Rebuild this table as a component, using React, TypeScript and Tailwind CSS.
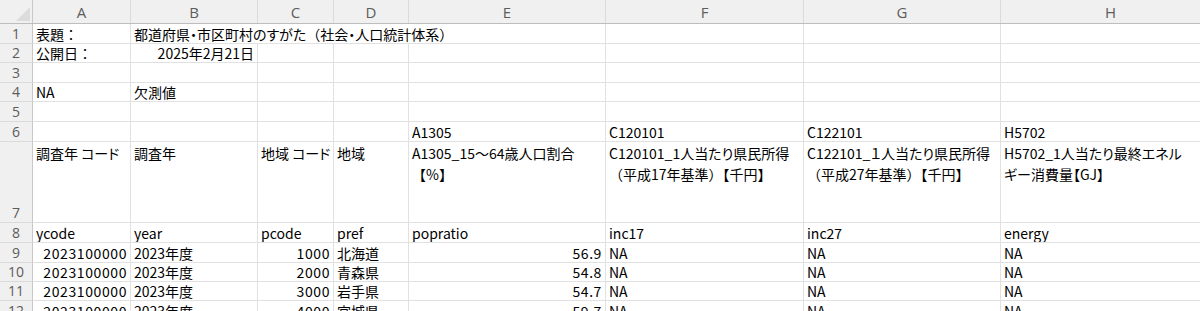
import React from "react";

type Cell = { text?: React.ReactNode; right?: boolean; num?: boolean; over?: boolean; noBorder?: boolean };

const colW = ["w-[98px]", "w-[127px]", "w-[76px]", "w-[75px]", "w-[197px]", "w-[198px]", "w-[197px]", "w-[220px]"];
const colLetters = ["A", "B", "C", "D", "E", "F", "G", "H"];
const rowH = ["h-[20px]", "h-[19px]", "h-[20px]", "h-[19px]", "h-[20px]", "h-[20px]", "h-[81px]", "h-[20px]", "h-[20px]", "h-[19px]", "h-[19px]", "h-[20px]"];

// full-width punctuation without palt squeeze
const Fw = ({ c }: { c: string }) => <span className="[font-feature-settings:normal]">{c}</span>;

const dataRows = [
  ["北海道", "1000", "56.9"],
  ["青森県", "2000", "54.8"],
  ["岩手県", "3000", "54.7"],
  ["宮城県", "4000", "59.7"],
];

const empty = (): Cell[] => [{}, {}, {}, {}, {}, {}, {}, {}];

const rows: Cell[][] = [
  [
    { text: <>表題<Fw c="：" /></> },
    { text: <>都道府県・市区町村のすがた<Fw c="（" />社会・人口統計体系<Fw c="）" /></>, over: true, noBorder: true },
    { noBorder: true },
    { noBorder: true },
    {}, {}, {}, {},
  ],
  [{ text: <>公開日<Fw c="：" /></> }, { text: "2025年2月21日", right: true }, {}, {}, {}, {}, {}, {}],
  empty(),
  [{ text: "NA" }, { text: "欠測値" }, {}, {}, {}, {}, {}, {}],
  empty(),
  [{}, {}, {}, {}, { text: "A1305" }, { text: "C120101" }, { text: "C122101" }, { text: "H5702" }],
  [
    { text: "調査年 コード" },
    { text: "調査年" },
    { text: "地域 コード" },
    { text: "地域" },
    { text: <>A1305_15～64歳人口割合<br /><Fw c="【" />%<Fw c="】" /></> },
    { text: <>C120101_1人当たり県民所得<br /><span className="[font-feature-settings:normal]">（平成17年基準）【千円】</span></> },
    { text: <>C122101_１人当たり県民所得<br /><span className="[font-feature-settings:normal]">（平成27年基準）【千円】</span></> },
    { text: <>H5702_1人当たり最終エネル<br />ギー消費量【GJ】</> },
  ],
  [{ text: "ycode" }, { text: "year" }, { text: "pcode" }, { text: "pref" }, { text: "popratio" }, { text: "inc17" }, { text: "inc27" }, { text: "energy" }],
  ...dataRows.map(([pref, code, ratio]) => [
    { text: "2023100000", right: true, num: true },
    { text: "2023年度" },
    { text: code, right: true, num: true },
    { text: pref },
    { text: ratio, right: true, num: true },
    { text: "NA" },
    { text: "NA" },
    { text: "NA" },
  ]),
];

export default function App() {
  return (
    <div className="w-[1200px] h-[311px] overflow-hidden bg-white text-black text-[14px] font-['Noto_Sans_CJK_JP','Noto_Sans',sans-serif] [font-feature-settings:'palt']">
      {/* column letters */}
      <div className="flex h-[24px] bg-[#f0f0f0] border-b border-[#bdbdbd]">
        <div className="relative w-[33px] shrink-0 border-r border-[#c8c8c8]">
          <svg className="absolute right-[2px] bottom-[2px]" width="14" height="14" viewBox="0 0 14 14">
            <polygon points="14,0 14,14 0,14" fill="#dcdcdc" />
          </svg>
        </div>
        {colLetters.map((l, i) => (
          <div
            key={l}
            className={`${colW[i]} shrink-0 flex items-center justify-center border-r border-[#dadada] text-[15px] text-[#5c5c5c] pt-[1px] font-['Open_Sans',sans-serif]`}
          >
            {l}
          </div>
        ))}
      </div>

      {rows.map((r, ri) => {
        const tall = ri === 6;
        return (
          <div key={ri} className={`flex ${rowH[ri]}`}>
            <div className="w-[33px] shrink-0 bg-[#f0f0f0] border-r border-[#c8c8c8] border-b border-b-[#dadada] flex items-end justify-center text-[14px] text-[#5c5c5c] leading-[18px] font-['Open_Sans',sans-serif]">
              {ri + 1}
            </div>
            {r.map((c, ci) => (
              <div
                key={ci}
                className={[
                  colW[ci],
                  "shrink-0 flex border-b border-[#e1e1e1] px-[3px] whitespace-nowrap",
                  c.noBorder ? "" : "border-r",
                  c.over ? "relative z-10 overflow-visible" : "overflow-hidden",
                  tall ? "items-start pt-[1px] leading-[21px]" : "items-end leading-[18px]",
                  c.right ? "justify-end" : "justify-start",
                  c.num ? "tracking-[0.6px]" : "",
                ].join(" ")}
              >
                {c.text && <span>{c.text}</span>}
              </div>
            ))}
          </div>
        );
      })}
    </div>
  );
}
